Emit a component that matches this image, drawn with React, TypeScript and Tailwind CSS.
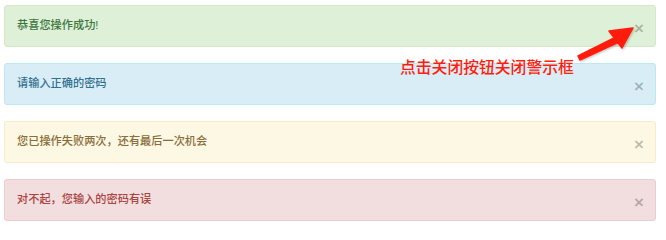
import React from 'react';

const alerts = [
  { text: '恭喜您操作成功!', cls: 'bg-[#dff0d8] border-[#d6e9c6] text-[#3c763d]' },
  { text: '请输入正确的密码', cls: 'bg-[#d9edf7] border-[#bce8f1] text-[#31708f]' },
  { text: '您已操作失败两次，还有最后一次机会', cls: 'bg-[#fcf8e3] border-[#faebcc] text-[#8a6d3b]' },
  { text: '对不起，您输入的密码有误', cls: 'bg-[#f2dede] border-[#ebccd1] text-[#a94442]' },
];

export default function App() {
  return (
    <div
      className="relative w-[666px] h-[238px] bg-white pl-[4px] pr-[10px] pt-[5px] flex flex-col gap-[16px]"
      style={{ fontFamily: '"Liberation Sans", "Noto Sans CJK SC", sans-serif' }}
    >
      {alerts.map((a) => (
        <div
          key={a.text}
          className={`h-[42px] border rounded-[3px] flex items-center justify-between pl-[12px] pr-[11px] ${a.cls}`}
        >
          <span className="text-[11.2px] leading-none font-medium">{a.text}</span>
          <button className="text-[17px] font-bold leading-none text-black/25 mt-[4px]">×</button>
        </div>
      ))}

      {/* annotation */}
      <div className="absolute left-[400px] top-[60px] text-[15.8px] leading-none font-medium text-[#ff1e0e] whitespace-nowrap">
        点击关闭按钮关闭警示框
      </div>
      <svg className="absolute left-0 top-0 pointer-events-none" width="666" height="238">
        <defs>
          <filter id="sh" x="-20%" y="-20%" width="140%" height="140%">
            <feDropShadow dx="1" dy="1" stdDeviation="0.8" floodColor="#000" floodOpacity="0.25" />
          </filter>
        </defs>
        <g filter="url(#sh)" fill="#ff1e0e" stroke="#ff1e0e" strokeLinejoin="round">
          <polygon points="578,56 580,60 619,42 616,37" strokeWidth="1.5" />
          <polygon points="633,28 609,31 622,48" strokeWidth="1.5" />
        </g>
      </svg>
    </div>
  );
}
